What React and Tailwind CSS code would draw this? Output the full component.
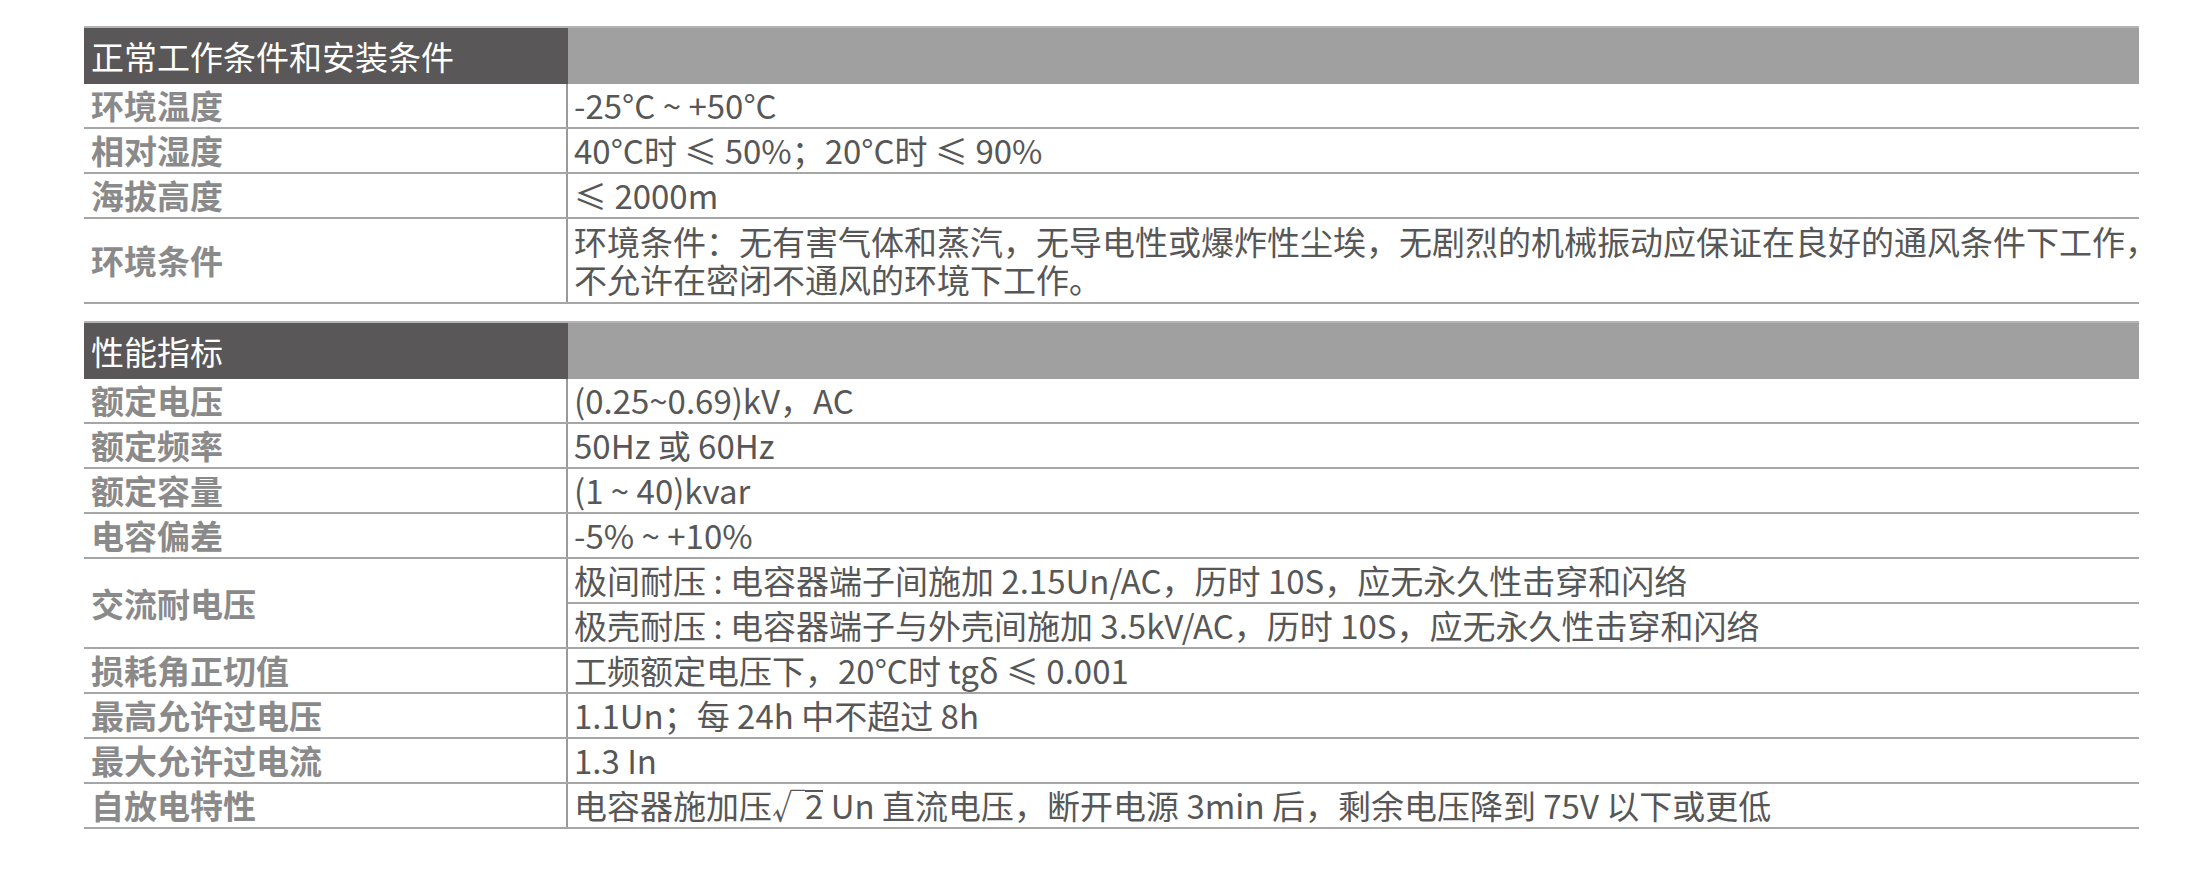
import React from "react";

const FONT = { fontFamily: '"Noto Sans CJK SC", "Noto Sans", sans-serif' };

function Header({ title }) {
  return (
    <div className="flex h-[58px] border-t-2 border-[#b4b4b4]">
      <div className="w-[484px] shrink-0 bg-[#595757] text-white flex items-center pl-[7px]">
        {title}
      </div>
      <div className="flex-1 bg-[#a0a0a0]" />
    </div>
  );
}

function Row({ label, children, tall }) {
  return (
    <div
      className={
        "flex border-b-2 border-[#a6a6a6] " + (tall ? "h-[85px]" : "h-[45px]")
      }
    >
      <div className="w-[484px] shrink-0 border-r-2 border-[#9a9a9a] flex items-center pl-[7px] font-bold text-[#8a8a8a]">
        {label}
      </div>
      <div className="flex-1 min-w-0 flex flex-col justify-center pl-[6px] text-[#575757] whitespace-nowrap">
        {children}
      </div>
    </div>
  );
}

function SplitRow({ label, lines }) {
  return (
    <div className="flex h-[90px] border-b-2 border-[#a6a6a6]">
      <div className="w-[484px] shrink-0 border-r-2 border-[#9a9a9a] flex items-center pl-[7px] font-bold text-[#8a8a8a]">
        {label}
      </div>
      <div className="flex-1 flex flex-col whitespace-nowrap">
        <div className="h-[45px] flex items-center pl-[6px] text-[#575757] border-b-2 border-[#a6a6a6]">
          {lines[0]}
        </div>
        <div className="flex-1 flex items-center pl-[6px] text-[#575757]">
          {lines[1]}
        </div>
      </div>
    </div>
  );
}

export default function App() {
  return (
    <div className="w-[2203px] h-[888px] bg-white overflow-hidden" style={FONT}>
      <div className="ml-[84px] w-[2055px] pt-[26px] text-[33px] leading-none">
        <Header title="正常工作条件和安装条件" />
        <Row label="环境温度">
          <div>-25°C ~ +50°C</div>
        </Row>
        <Row label="相对湿度">
          <div>40°C时 ≤ 50%；20°C时 ≤ 90%</div>
        </Row>
        <Row label="海拔高度">
          <div>≤ 2000m</div>
        </Row>
        <Row label="环境条件" tall>
          <div className="h-[38px] flex items-center">
            环境条件：无有害气体和蒸汽，无导电性或爆炸性尘埃，无剧烈的机械振动应保证在良好的通风条件下工作，
          </div>
          <div className="h-[38px] flex items-center">不允许在密闭不通风的环境下工作。</div>
        </Row>

        <div className="h-[17px]" />

        <Header title="性能指标" />
        <Row label="额定电压">
          <div>(0.25~0.69)kV，AC</div>
        </Row>
        <Row label="额定频率">
          <div>50Hz 或 60Hz</div>
        </Row>
        <Row label="额定容量">
          <div>(1 ~ 40)kvar</div>
        </Row>
        <Row label="电容偏差">
          <div>-5% ~ +10%</div>
        </Row>
        <SplitRow
          label="交流耐电压"
          lines={[
            "极间耐压 : 电容器端子间施加 2.15Un/AC，历时 10S，应无永久性击穿和闪络",
            "极壳耐压 : 电容器端子与外壳间施加 3.5kV/AC，历时 10S，应无永久性击穿和闪络",
          ]}
        />
        <Row label="损耗角正切值">
          <div>工频额定电压下，20°C时 tgδ ≤ 0.001</div>
        </Row>
        <Row label="最高允许过电压">
          <div>1.1Un；每 24h 中不超过 8h</div>
        </Row>
        <Row label="最大允许过电流">
          <div>1.3 In</div>
        </Row>
        <Row label="自放电特性">
          <div>
            电容器施加压√<span className="inline-block leading-[26px] border-t-2 border-[#575757]">2</span> Un 直流电压，断开电源 3min 后，剩余电压降到 75V 以下或更低
          </div>
        </Row>
      </div>
    </div>
  );
}
